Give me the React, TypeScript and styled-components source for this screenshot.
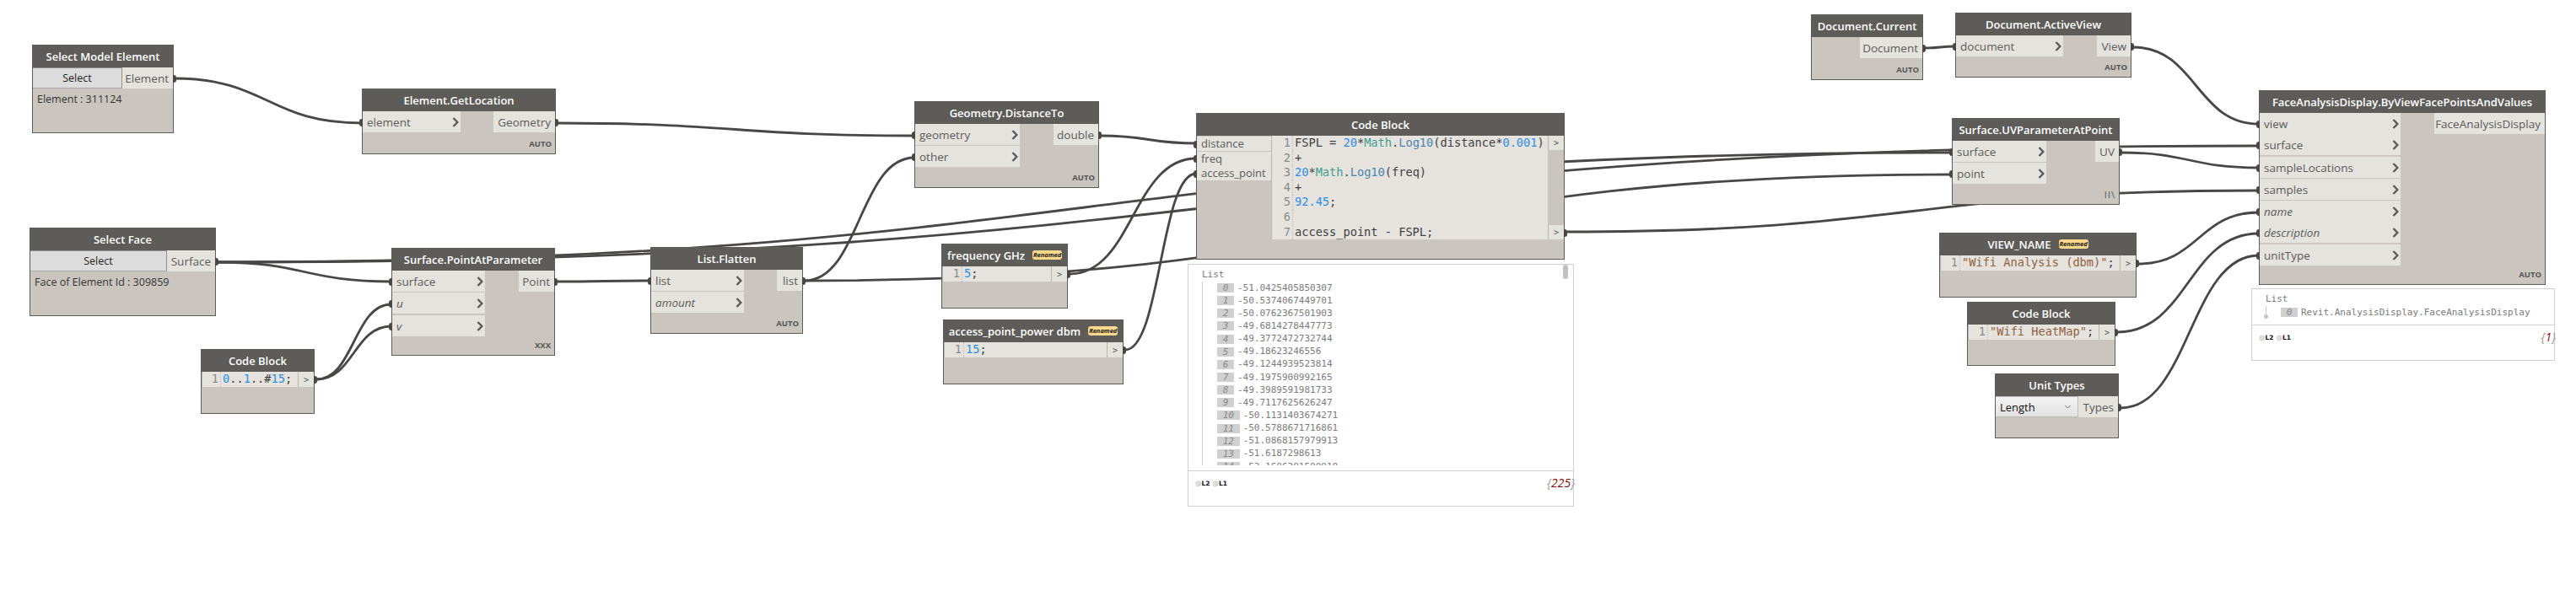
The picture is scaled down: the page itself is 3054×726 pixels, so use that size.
import React from 'react'
import styled, { createGlobalStyle } from 'styled-components'

const GlobalStyle = createGlobalStyle`
  html, body {
    margin: 0;
    padding: 0;
    background: #fff;
    overflow: hidden;
  }
  * {
    box-sizing: border-box;
  }
`

const Canvas = styled.div`
  position: relative;
  width: 3054px;
  height: 726px;
  background: #fff;
  overflow: hidden;
  font-family: 'Open Sans', sans-serif;
`

const WireLayer = styled.svg`
  position: absolute;
  left: 0;
  top: 0;
`

const Wire = styled.path`
  fill: none;
  stroke: #484745;
  stroke-width: 2.8;
`

const NodeBox = styled.div<{ $x: number; $y: number; $w: number; $h: number }>`
  position: absolute;
  left: ${(p) => p.$x}px;
  top: ${(p) => p.$y}px;
  width: ${(p) => p.$w}px;
  height: ${(p) => p.$h}px;
  display: flex;
  flex-direction: column;
  background: #cac6bf;
  border: 1px solid #5e5c59;
`

const Header = styled.div`
  flex: none;
  height: 27px;
  margin: -1px -1px 0;
  display: flex;
  align-items: center;
  justify-content: center;
  gap: 9px;
  background: #5e5c59;
  color: #fff;
  font-size: 13px;
  font-weight: 600;
  white-space: nowrap;
`

const Badge = styled.span`
  width: 35px;
  height: 11px;
  border-radius: 3px;
  background: #fcd88a;
  color: #222;
  font-size: 7.5px;
  font-weight: 700;
  font-style: italic;
  line-height: 11px;
  text-align: center;
`

const Body = styled.div`
  flex: none;
  display: flex;
  justify-content: space-between;
  align-items: flex-start;
`

const PortColumn = styled.div<{ $w: number }>`
  flex: none;
  width: ${(p) => p.$w}px;
  display: flex;
  flex-direction: column;
`

const Port = styled.div<{ $gap?: number; $wired?: boolean; $side: 'in' | 'out' }>`
  position: relative;
  height: 25px;
  margin-top: ${(p) => p.$gap ?? 0}px;
  display: flex;
  align-items: center;
  justify-content: ${(p) => (p.$side === 'in' ? 'space-between' : 'flex-end')};
  padding: ${(p) => (p.$side === 'in' ? '0 2px 0 5px' : '0 5px')};
  background: #e4e3de;
  color: #5c5b59;
  font-size: 13.5px;
  white-space: nowrap;

  ${(p) =>
    p.$wired
      ? `&::after {
    content: '';
    position: absolute;
    top: 50%;
    ${p.$side === 'in' ? 'left: -4px' : 'right: -4px'};
    width: 4px;
    height: 9px;
    margin-top: -4px;
    background: #484745;
    border-radius: ${p.$side === 'in' ? '3px 0 0 3px' : '0 3px 3px 0'};
  }`
      : ''}
`

const PortLabel = styled.span<{ $optional?: boolean }>`
  font-style: ${(p) => (p.$optional ? 'italic' : 'normal')};
`

const Lacing = styled.div<{ $thin?: boolean }>`
  margin-top: auto;
  padding: 0 4px 5px 0;
  text-align: right;
  color: #555;
  font-size: ${(p) => (p.$thin ? 11 : 9.5)}px;
  font-weight: ${(p) => (p.$thin ? 400 : 700)};
  letter-spacing: ${(p) => (p.$thin ? 1 : 0)}px;
  line-height: 12px;
`

const SelectRow = styled.div`
  flex: none;
  display: flex;
  height: 25px;
`

const SelectButton = styled.div`
  flex: 1;
  display: flex;
  align-items: center;
  justify-content: center;
  background: #dcdcdc;
  border-top: 1px solid #8f8f8f;
  border-right: 1px solid #8f8f8f;
  border-bottom: 1px solid #a8a8a8;
  color: #222;
  font-size: 12.5px;
`

const NodeInfo = styled.div`
  padding: 4px 5px 0;
  color: #333;
  font-size: 12.5px;
  white-space: nowrap;
`

const Dropdown = styled.div`
  flex: 1;
  display: flex;
  align-items: center;
  justify-content: space-between;
  padding: 0 8px 0 5px;
  background: linear-gradient(#f3f3f3, #e2e2e2);
  border-top: 1px solid #bbb;
  border-bottom: 1px solid #bbb;
  border-right: 1px solid #bbb;
  color: #111;
  font-size: 13px;
`

const CodeRow = styled.div`
  flex: none;
  display: flex;
  align-items: flex-start;
`

const CodeInputs = styled.div<{ $w: number }>`
  flex: none;
  width: ${(p) => p.$w}px;
  display: flex;
  flex-direction: column;
  padding-top: 1px;
`

const CodeInput = styled.div`
  position: relative;
  height: 17px;
  margin-bottom: 0.5px;
  padding-left: 5px;
  background: #e4e3de;
  color: #5c5b59;
  font-size: 13px;
  line-height: 17px;

  &::after {
    content: '';
    position: absolute;
    top: 50%;
    left: -4px;
    width: 4px;
    height: 9px;
    margin-top: -4px;
    background: #484745;
    border-radius: 3px 0 0 3px;
  }
`

const Editor = styled.div`
  flex: 1;
  min-width: 0;
  display: flex;
  flex-direction: column;
  background: #e6e3df;
  border-left: 1px solid #b9b6b0;
  font-family: 'DejaVu Sans Mono', monospace;
  font-size: 13.65px;
`

const CodeLine = styled.div`
  display: flex;
  height: 17.6px;
  line-height: 17.6px;
  white-space: pre;
`

const Gutter = styled.span<{ $w: number }>`
  flex: none;
  width: ${(p) => p.$w}px;
  padding-right: 2px;
  text-align: right;
  color: #8a8a88;
  border-right: 1px dotted #c0bdb8;
  margin-right: 2px;
`

const Token = styled.span<{ $kind?: 'num' | 'cls' | 'fn' | 'str' }>`
  color: ${(p) =>
    ({ num: '#2b8fe3', cls: '#3f9f8d', fn: '#4a86ad', str: '#8f6240' })[p.$kind ?? 'x'] ??
    '#3f3f3f'};
`

const OutputColumn = styled.div`
  flex: none;
  width: 19px;
  align-self: stretch;
  display: flex;
  flex-direction: column;
  justify-content: space-between;
`

const OutputButton = styled.div<{ $wired?: boolean; $tall?: boolean }>`
  position: relative;
  height: ${(p) => (p.$tall ? 18 : 17)}px;
  display: flex;
  align-items: center;
  justify-content: center;
  background: #e4e3de;
  border-left: 1px solid #b9b6b0;
  color: #555;
  font-family: 'DejaVu Sans Mono', monospace;
  font-size: 10px;

  ${(p) =>
    p.$wired
      ? `&::after {
    content: '';
    position: absolute;
    top: 50%;
    right: -4px;
    width: 4px;
    height: 9px;
    margin-top: -4px;
    background: #484745;
    border-radius: 0 3px 3px 0;
  }`
      : ''}
`

const WatchBox = styled.div<{ $x: number; $y: number; $w: number; $h: number }>`
  position: absolute;
  left: ${(p) => p.$x}px;
  top: ${(p) => p.$y}px;
  width: ${(p) => p.$w}px;
  height: ${(p) => p.$h}px;
  display: flex;
  flex-direction: column;
  background: #fff;
  border: 1px solid #cfcfcf;
`

const WatchList = styled.div<{ $h: number }>`
  position: relative;
  flex: none;
  height: ${(p) => p.$h}px;
  padding: 5px 0 0 16px;
  border-bottom: 1px solid #cfcfcf;
  color: #7a7a7a;
  font-family: 'DejaVu Sans Mono', monospace;
  font-size: 11px;
  line-height: 14px;
`

const WatchRows = styled.div<{ $h: number; $open?: boolean }>`
  position: relative;
  height: ${(p) => p.$h}px;
  margin-top: 1px;
  padding-left: 17px;
  border-left: 1px solid #cfcfcf;
  overflow: ${(p) => (p.$open ? 'visible' : 'hidden')};
`

const WatchDot = styled.span`
  position: absolute;
  left: 14px;
  top: 30px;
  width: 5px;
  height: 5px;
  border-radius: 50%;
  background: #c4c4c4;
`

const WatchRow = styled.div`
  display: flex;
  align-items: center;
  gap: 4px;
  height: 15.15px;
  white-space: pre;
`

const IndexTag = styled.span`
  height: 11px;
  padding: 0 6.7px;
  background: #d0d0d0;
  color: #8a8a8a;
  font-style: italic;
  line-height: 11px;
`

const WatchFooter = styled.div`
  flex: 1;
  display: flex;
  align-items: flex-start;
  justify-content: space-between;
  padding: 4px 0 0 8px;
  font-size: 14px;
  line-height: 20px;
`

const Levels = styled.span`
  display: flex;
  gap: 3px;
  padding-top: 1px;
  color: #111;
  font-family: 'DejaVu Sans', sans-serif;
  font-size: 7.5px;
  font-weight: 700;

  i {
    color: #aaa;
    font-style: normal;
    font-weight: 400;
  }
`

const Count = styled.span`
  margin-right: -2px;
  color: #999;
  font-style: italic;

  b {
    color: #8a0a0a;
    font-weight: 400;
  }
`

const Scroll = styled.span`
  position: absolute;
  right: 6px;
  top: 0;
  width: 6px;
  height: 17px;
  border-radius: 3px;
  background: #c0c0c0;
`

function Chevron() {
  return (
    <svg width="8" height="12" viewBox="0 0 8 12">
      <path d="M1.5 1 L6.3 6 L1.5 11" fill="none" stroke="#5a5a58" strokeWidth="2.4" />
    </svg>
  )
}

type InPort = { label: string; optional?: boolean; gap?: number; wired?: boolean }
type OutPort = { label: string; wired?: boolean }
type Box = { x: number; y: number; w: number; h: number }

function FunctionNode(
  props: Box & {
    title: string
    inputs: InPort[]
    inW: number
    outputs: OutPort[]
    outW: number
    lacing?: string
    thinLacing?: boolean
  },
) {
  return (
    <NodeBox $x={props.x} $y={props.y} $w={props.w} $h={props.h}>
      <Header>{props.title}</Header>
      <Body>
        <PortColumn $w={props.inW}>
          {props.inputs.map((p) => (
            <Port key={p.label} $side="in" $gap={p.gap} $wired={p.wired !== false}>
              <PortLabel $optional={p.optional}>{p.label}</PortLabel>
              <Chevron />
            </Port>
          ))}
        </PortColumn>
        <PortColumn $w={props.outW}>
          {props.outputs.map((p) => (
            <Port key={p.label} $side="out" $wired={p.wired !== false}>
              {p.label}
            </Port>
          ))}
        </PortColumn>
      </Body>
      {props.lacing && <Lacing $thin={props.thinLacing}>{props.lacing}</Lacing>}
    </NodeBox>
  )
}

function SelectNode(props: Box & { title: string; output: string; outW: number; info: string }) {
  return (
    <NodeBox $x={props.x} $y={props.y} $w={props.w} $h={props.h}>
      <Header>{props.title}</Header>
      <SelectRow>
        <SelectButton>Select</SelectButton>
        <PortColumn $w={props.outW}>
          <Port $side="out" $wired>
            {props.output}
          </Port>
        </PortColumn>
      </SelectRow>
      <NodeInfo>{props.info}</NodeInfo>
    </NodeBox>
  )
}

function CodeNode(props: Box & { title: string; renamed?: boolean; children: React.ReactNode; gutter: number }) {
  return (
    <NodeBox $x={props.x} $y={props.y} $w={props.w} $h={props.h}>
      <Header>
        {props.title}
        {props.renamed && <Badge>Renamed</Badge>}
      </Header>
      <CodeRow>
        <Editor>
          <CodeLine>
            <Gutter $w={props.gutter}>1</Gutter>
            {props.children}
          </CodeLine>
        </Editor>
        <OutputColumn>
          <OutputButton $wired $tall>
            &gt;
          </OutputButton>
        </OutputColumn>
      </CodeRow>
    </NodeBox>
  )
}

const listValues = [
  '-51.0425405850307',
  '-50.5374067449701',
  '-50.0762367501903',
  '-49.6814278447773',
  '-49.3772472732744',
  '-49.18623246556',
  '-49.1244939523814',
  '-49.1975900992165',
  '-49.3989591981733',
  '-49.7117625626247',
  '-50.1131403674271',
  '-50.5788671716861',
  '-51.0868157979913',
  '-51.6187298613',
  '-52.1606301500918',
]

const wire = (x1: number, y1: number, x2: number, y2: number) => {
  const mid = (x1 + x2) / 2
  return `M${x1} ${y1} C${mid} ${y1} ${mid} ${y2} ${x2} ${y2}`
}

const wires: [number, number, number, number][] = [
  [206, 93, 429, 146],
  [660, 146, 1084, 161],
  [258, 311, 464, 334],
  [258, 311, 2314, 181],
  [258, 311, 2678, 173],
  [660, 334, 771, 333],
  [954, 333, 1084, 187],
  [954, 333, 2314, 207],
  [375, 450, 464, 361],
  [375, 450, 464, 387],
  [1305, 161, 1418, 170],
  [1268, 325, 1418, 188],
  [1334, 415, 1418, 206],
  [1857, 275, 2678, 226],
  [2282, 57, 2318, 55],
  [2529, 56, 2678, 147],
  [2514, 181, 2678, 199],
  [2535, 313, 2678, 252],
  [2510, 394, 2678, 277],
  [2514, 484, 2678, 303],
]

const Num = ({ children }: { children: string }) => <Token $kind="num">{children}</Token>
const Cls = () => <Token $kind="cls">Math</Token>
const Fn = () => <Token $kind="fn">Log10</Token>

export default function App() {
  return (
    <Canvas>
      <GlobalStyle />
      <WireLayer width="3054" height="726">
        {wires.map((w, i) => (
          <Wire key={i} d={wire(w[0], w[1], w[2], w[3])} />
        ))}
      </WireLayer>

      <SelectNode x={38} y={53} w={168} h={105} title="Select Model Element" output="Element" outW={60} info="Element : 311124" />
      <SelectNode x={35} y={270} w={221} h={105} title="Select Face" output="Surface" outW={57} info="Face of Element Id : 309859" />

      <FunctionNode
        x={429}
        y={105}
        w={230}
        h={78}
        title="Element.GetLocation"
        inputs={[{ label: 'element' }]}
        inW={116}
        outputs={[{ label: 'Geometry' }]}
        outW={73}
        lacing="AUTO"
      />
      <FunctionNode
        x={464}
        y={294}
        w={194}
        h={128}
        title="Surface.PointAtParameter"
        inputs={[{ label: 'surface' }, { label: 'u', optional: true, gap: 1 }, { label: 'v', optional: true, gap: 2 }]}
        inW={110}
        outputs={[{ label: 'Point' }]}
        outW={42}
        lacing="XXX"
      />
      <FunctionNode
        x={771}
        y={293}
        w={181}
        h={103}
        title="List.Flatten"
        inputs={[{ label: 'list' }, { label: 'amount', optional: true, gap: 1, wired: false }]}
        inW={110}
        outputs={[{ label: 'list' }]}
        outW={30}
        lacing="AUTO"
      />
      <FunctionNode
        x={1084}
        y={120}
        w={219}
        h={103}
        title="Geometry.DistanceTo"
        inputs={[{ label: 'geometry' }, { label: 'other', gap: 1 }]}
        inW={124}
        outputs={[{ label: 'double' }]}
        outW={53}
        lacing="AUTO"
      />

      <CodeNode x={238} y={414} w={135} h={77} title="Code Block" gutter={22}>
        <span>
          <Num>0</Num>
          <Token>..</Token>
          <Num>1</Num>
          <Token>..#</Token>
          <Num>15</Num>
          <Token>;</Token>
        </span>
      </CodeNode>
      <CodeNode x={1116} y={289} w={150} h={77} title="frequency GHz" renamed gutter={23}>
        <span>
          <Num>5</Num>
          <Token>;</Token>
        </span>
      </CodeNode>
      <CodeNode x={1118} y={379} w={214} h={77} title="access_point_power dbm" renamed gutter={23}>
        <span>
          <Num>15</Num>
          <Token>;</Token>
        </span>
      </CodeNode>

      <NodeBox $x={1418} $y={134} $w={437} $h={174}>
        <Header>Code Block</Header>
        <CodeRow>
          <CodeInputs $w={88}>
            <CodeInput>distance</CodeInput>
            <CodeInput>freq</CodeInput>
            <CodeInput>access_point</CodeInput>
          </CodeInputs>
          <Editor>
            <CodeLine>
              <Gutter $w={25}>1</Gutter>
              <span>
                <Token>FSPL = </Token>
                <Num>20</Num>
                <Token>*</Token>
                <Cls />
                <Token>.</Token>
                <Fn />
                <Token>(distance*</Token>
                <Num>0.001</Num>
                <Token>)</Token>
              </span>
            </CodeLine>
            <CodeLine>
              <Gutter $w={25}>2</Gutter>
              <Token>+</Token>
            </CodeLine>
            <CodeLine>
              <Gutter $w={25}>3</Gutter>
              <span>
                <Num>20</Num>
                <Token>*</Token>
                <Cls />
                <Token>.</Token>
                <Fn />
                <Token>(freq)</Token>
              </span>
            </CodeLine>
            <CodeLine>
              <Gutter $w={25}>4</Gutter>
              <Token>+</Token>
            </CodeLine>
            <CodeLine>
              <Gutter $w={25}>5</Gutter>
              <span>
                <Num>92.45</Num>
                <Token>;</Token>
              </span>
            </CodeLine>
            <CodeLine>
              <Gutter $w={25}>6</Gutter>
            </CodeLine>
            <CodeLine>
              <Gutter $w={25}>7</Gutter>
              <Token>access_point - FSPL;</Token>
            </CodeLine>
          </Editor>
          <OutputColumn>
            <OutputButton>&gt;</OutputButton>
            <OutputButton $wired>&gt;</OutputButton>
          </OutputColumn>
        </CodeRow>
      </NodeBox>

      <WatchBox $x={1408} $y={313} $w={458} $h={288}>
        <WatchList $h={245}>
          List
          <WatchRows $h={218}>
            {listValues.map((v, i) => (
              <WatchRow key={i}>
                <IndexTag>{i}</IndexTag>
                {v}
              </WatchRow>
            ))}
          </WatchRows>
          <Scroll />
        </WatchList>
        <WatchFooter>
          <Levels>
            <span>
              <i>@</i>L2
            </span>
            <span>
              <i>@</i>L1
            </span>
          </Levels>
          <Count>
            {'{'}
            <b>225</b>
            {'}'}
          </Count>
        </WatchFooter>
      </WatchBox>

      <FunctionNode
        x={2147}
        y={17}
        w={133}
        h={78}
        title="Document.Current"
        inputs={[]}
        inW={0}
        outputs={[{ label: 'Document' }]}
        outW={74}
        lacing="AUTO"
      />
      <FunctionNode
        x={2318}
        y={15}
        w={209}
        h={77}
        title="Document.ActiveView"
        inputs={[{ label: 'document' }]}
        inW={127}
        outputs={[{ label: 'View' }]}
        outW={40}
        lacing="AUTO"
      />
      <FunctionNode
        x={2314}
        y={140}
        w={199}
        h={103}
        title="Surface.UVParameterAtPoint"
        inputs={[{ label: 'surface' }, { label: 'point', gap: 1 }]}
        inW={111}
        outputs={[{ label: 'UV' }]}
        outW={28}
        lacing="II\"
        thinLacing
      />

      <CodeNode x={2299} y={276} w={234} h={77} title="VIEW_NAME" renamed gutter={23}>
        <Token $kind="str">"Wifi Analysis (dbm)"</Token>
        <Token>;</Token>
      </CodeNode>
      <CodeNode x={2332} y={358} w={176} h={76} title="Code Block" gutter={23}>
        <Token $kind="str">"Wifi HeatMap"</Token>
        <Token>;</Token>
      </CodeNode>

      <NodeBox $x={2365} $y={443} $w={147} $h={77}>
        <Header>Unit Types</Header>
        <SelectRow>
          <Dropdown>
            Length
            <svg width="7" height="5" viewBox="0 0 7 5">
              <path d="M0.5 1 L3.5 4 L6.5 1" fill="none" stroke="#666" strokeWidth="1" />
            </svg>
          </Dropdown>
          <PortColumn $w={47}>
            <Port $side="out" $wired>
              Types
            </Port>
          </PortColumn>
        </SelectRow>
      </NodeBox>

      <FunctionNode
        x={2678}
        y={107}
        w={340}
        h={231}
        title="FaceAnalysisDisplay.ByViewFacePointsAndValues"
        inputs={[
          { label: 'view' },
          { label: 'surface' },
          { label: 'sampleLocations', gap: 2 },
          { label: 'samples', gap: 1 },
          { label: 'name', optional: true, gap: 1 },
          { label: 'description', optional: true },
          { label: 'unitType', gap: 2 },
        ]}
        inW={167}
        outputs={[{ label: 'FaceAnalysisDisplay', wired: false }]}
        outW={131}
        lacing="AUTO"
      />

      <WatchBox $x={2669} $y={342} $w={360} $h={86}>
        <WatchList $h={43}>
          List
          <WatchRows $h={10} $open>
            <WatchRow>
              <IndexTag>0</IndexTag>
              Revit.AnalysisDisplay.FaceAnalysisDisplay
            </WatchRow>
          </WatchRows>
          <WatchDot />
        </WatchList>
        <WatchFooter>
          <Levels>
            <span>
              <i>@</i>L2
            </span>
            <span>
              <i>@</i>L1
            </span>
          </Levels>
          <Count>
            {'{'}
            <b>1</b>
            {'}'}
          </Count>
        </WatchFooter>
      </WatchBox>
    </Canvas>
  )
}
